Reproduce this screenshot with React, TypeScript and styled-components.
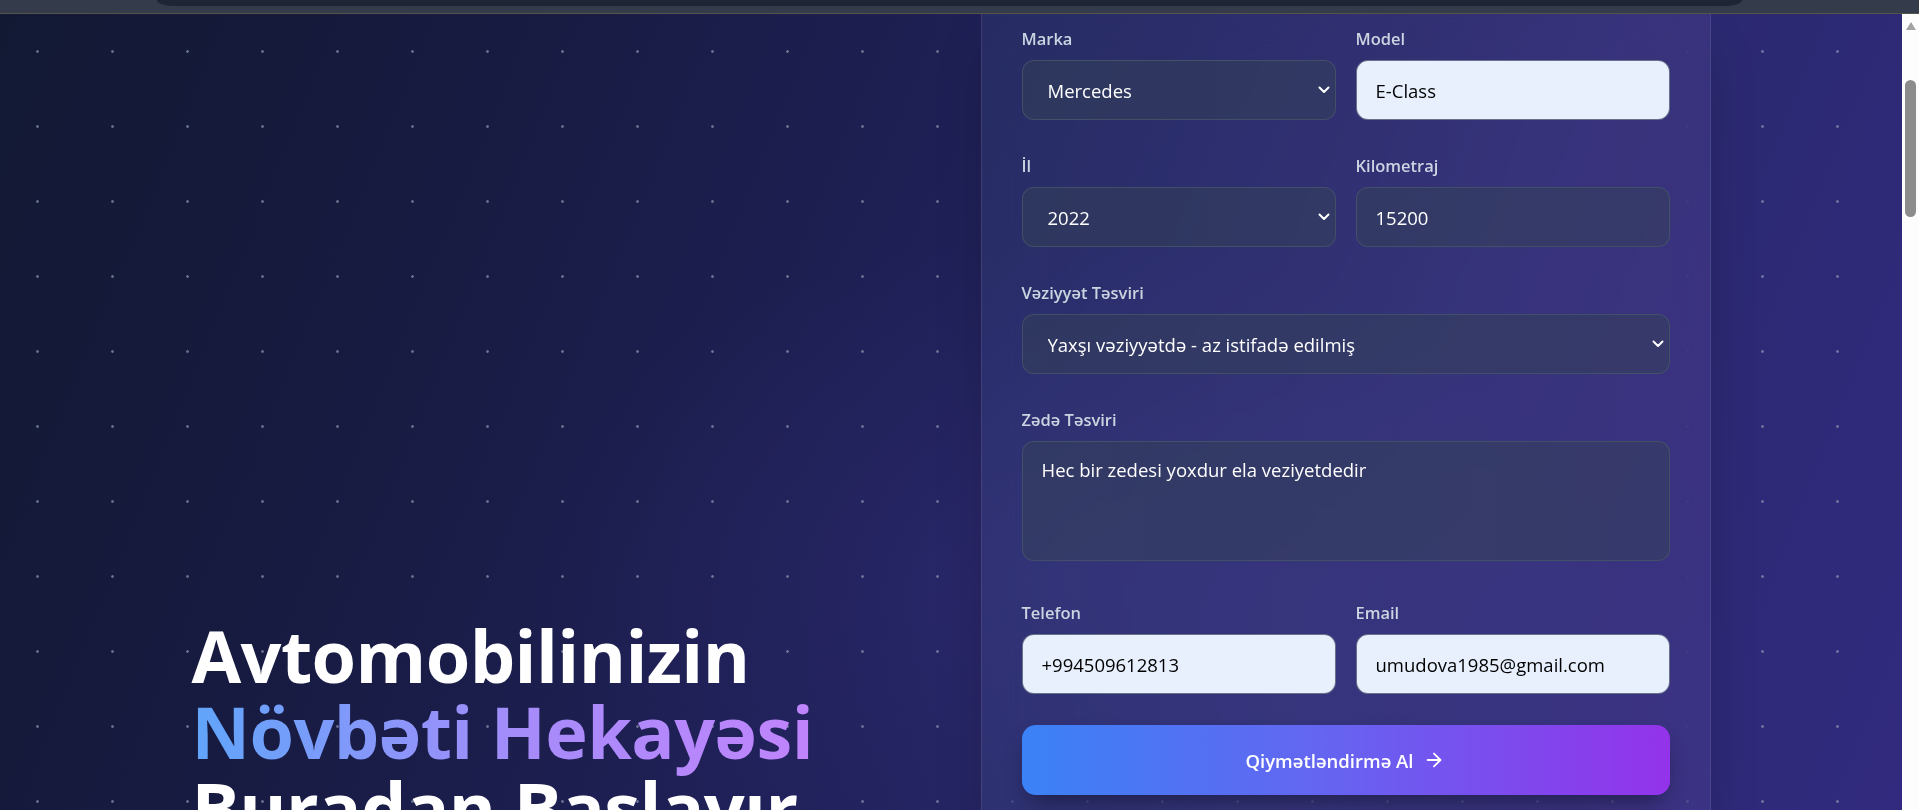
import React from "react";
import styled, { createGlobalStyle, css } from "styled-components";
import { ArrowRight } from "lucide-react";

const FONT = `"Open Sans", "Noto Sans", "DejaVu Sans", sans-serif`;

const GlobalStyle = createGlobalStyle`
  *, *::before, *::after { box-sizing: border-box; }
  html, body { margin: 0; padding: 0; height: 100%; overflow: hidden; background: #1b1d4a; }
  body { font-family: ${FONT}; -webkit-font-smoothing: antialiased; }
`;

const Screen = styled.div`
  width: 1919px;
  height: 810px;
  display: flex;
  flex-direction: column;
`;

const BrowserStrip = styled.div`
  flex: 0 0 14px;
  background: #343c4b;
  border-bottom: 1px solid #55534a;
  padding: 0 177px 0 157px;
`;

const StripTab = styled.div`
  height: 6px;
  background: #1e2535;
  border-bottom-left-radius: 16px 6px;
  border-bottom-right-radius: 16px 6px;
`;

const Viewport = styled.div`
  flex: 1;
  min-height: 0;
  display: flex;
`;

const Page = styled.main`
  flex: 1;
  min-width: 0;
  overflow: hidden;
  background-color: #1b1d4a;
  background-image:
    radial-gradient(circle, rgba(148, 163, 184, 0.6) 1px, transparent 1.7px),
    radial-gradient(ellipse 40% 60% at 55% 70%, rgba(76, 60, 160, 0.18), transparent 70%),
    linear-gradient(112deg, #121933 0%, #181b42 25%, #20215a 50%, #2a296e 72%, #312a7e 100%);
  background-size: 75px 75px, 100% 100%, 100% 100%;
`;

const Container = styled.div`
  width: 1519px;
  height: 100%;
  margin: 0 auto;
  display: grid;
  grid-template-columns: 1fr 730px;
  align-items: start;
`;

const HeroColumn = styled.section`
  padding-top: 603px;
`;

const Headline = styled.h1`
  margin: 0;
  font-family: ${FONT};
  font-weight: 700;
  font-size: 72px;
  line-height: 76px;
  letter-spacing: -0.6px;
  color: #ffffff;
`;

const HeadLine = styled.span`
  display: block;
  white-space: nowrap;
`;

const GradientText = styled.span`
  background: linear-gradient(90deg, #60a5fa 0%, #a78bfa 55%, #c084fc 100%);
  -webkit-background-clip: text;
  background-clip: text;
  color: transparent;
`;

const FormCard = styled.section`
  background:
    linear-gradient(90deg, rgba(59, 130, 246, 0.06), rgba(168, 85, 247, 0.06)),
    rgba(255, 255, 255, 0.035);
  border: 1px solid rgba(255, 255, 255, 0.09);
  border-top: 0;
  backdrop-filter: blur(18px);
  box-shadow: 0 25px 50px -12px rgba(0, 0, 0, 0.25);
  padding: 14px 40px 40px;
`;

const Form = styled.form`
  display: flex;
  flex-direction: column;
  gap: 35px;
`;

const FieldGrid = styled.div<{ $cols: number }>`
  display: grid;
  grid-template-columns: repeat(${(p) => p.$cols}, 1fr);
  gap: 20px;
`;

const Field = styled.div`
  display: flex;
  flex-direction: column;
  min-width: 0;
`;

const Label = styled.label`
  display: block;
  font-family: ${FONT};
  font-weight: 600;
  font-size: 16.5px;
  line-height: 22px;
  color: #cbd5e1;
  margin-bottom: 10px;
`;

const controlBase = css<{ $filled?: boolean }>`
  width: 100%;
  font-family: ${FONT};
  font-size: 18.5px;
  border-radius: 12px;
  border: 1px solid rgba(71, 85, 105, 0.85);
  background: rgba(51, 65, 85, 0.5);
  color: #ffffff;
  outline: none;
  padding: 0 19px;
  ${(p) =>
    p.$filled &&
    css`
      background: #e8f0fe;
      color: #000000;
      border-color: rgba(90, 100, 125, 0.9);
    `}
`;

const TextInput = styled.input<{ $filled?: boolean }>`
  ${controlBase};
  height: 60px;
`;

const SelectWrap = styled.div`
  position: relative;
`;

const Select = styled.select`
  ${controlBase};
  height: 60px;
  appearance: none;
  -webkit-appearance: none;
  padding-left: 25px;
  padding-right: 30px;
`;

const Chevron = styled.svg`
  position: absolute;
  right: 6px;
  top: 50%;
  transform: translateY(-50%);
  pointer-events: none;
`;

const TextArea = styled.textarea`
  ${controlBase};
  display: block;
  height: 120px;
  padding: 14px 19px;
  line-height: 1.5;
  resize: none;
  margin-bottom: 6px;
`;

const SubmitButton = styled.button`
  height: 70px;
  margin-top: -4px;
  border: none;
  border-radius: 14px;
  background: linear-gradient(90deg, #3b82f6 0%, #6366f1 45%, #9333ea 100%);
  box-shadow: 0 12px 24px -8px rgba(0, 0, 0, 0.45);
  color: #ffffff;
  font-family: ${FONT};
  font-weight: 600;
  font-size: 18.5px;
  display: flex;
  align-items: center;
  justify-content: center;
  gap: 10px;
  cursor: pointer;
`;

const Scrollbar = styled.aside`
  flex: 0 0 17px;
  background: #fdfdfd;
  display: flex;
  flex-direction: column;
  align-items: center;
  padding-top: 8px;
`;

const ScrollArrow = styled.div`
  width: 0;
  height: 0;
  border-left: 5.5px solid transparent;
  border-right: 5.5px solid transparent;
  border-bottom: 8px solid #a3a3a3;
`;

const ScrollThumb = styled.div`
  width: 11px;
  height: 137px;
  margin-top: 50px;
  border-radius: 6px;
  background: #8c8c8c;
`;

const ChevronIcon = () => (
  <Chevron width="12" height="8" viewBox="0 0 12 8" fill="none">
    <path d="M1.5 1.5L6 6L10.5 1.5" stroke="#ffffff" strokeWidth="2" strokeLinecap="round" strokeLinejoin="round" />
  </Chevron>
);

export default function App() {
  return (
    <>
      <GlobalStyle />
      <Screen>
        <BrowserStrip>
          <StripTab />
        </BrowserStrip>
        <Viewport>
          <Page>
            <Container>
              <HeroColumn>
                <Headline>
                  <HeadLine>Avtomobilinizin</HeadLine>
                  <HeadLine>
                    <GradientText>Növbəti Hekayəsi</GradientText>
                  </HeadLine>
                  <HeadLine>Buradan Başlayır</HeadLine>
                </Headline>
              </HeroColumn>
              <FormCard>
                <Form onSubmit={(e) => e.preventDefault()}>
                  <FieldGrid $cols={2}>
                    <Field>
                      <Label>Marka</Label>
                      <SelectWrap>
                        <Select defaultValue="Mercedes">
                          <option>Mercedes</option>
                          <option>BMW</option>
                          <option>Toyota</option>
                        </Select>
                        <ChevronIcon />
                      </SelectWrap>
                    </Field>
                    <Field>
                      <Label>Model</Label>
                      <TextInput $filled defaultValue="E-Class" />
                    </Field>
                  </FieldGrid>
                  <FieldGrid $cols={2}>
                    <Field>
                      <Label>İl</Label>
                      <SelectWrap>
                        <Select defaultValue="2022">
                          <option>2022</option>
                          <option>2021</option>
                          <option>2020</option>
                        </Select>
                        <ChevronIcon />
                      </SelectWrap>
                    </Field>
                    <Field>
                      <Label>Kilometraj</Label>
                      <TextInput defaultValue="15200" />
                    </Field>
                  </FieldGrid>
                  <FieldGrid $cols={1}>
                    <Field>
                      <Label>Vəziyyət Təsviri</Label>
                      <SelectWrap>
                        <Select defaultValue="good">
                          <option value="good">Yaxşı vəziyyətdə - az istifadə edilmiş</option>
                          <option value="new">Yeni kimi</option>
                        </Select>
                        <ChevronIcon />
                      </SelectWrap>
                    </Field>
                  </FieldGrid>
                  <FieldGrid $cols={1}>
                    <Field>
                      <Label>Zədə Təsviri</Label>
                      <TextArea defaultValue="Hec bir zedesi yoxdur ela veziyetdedir" />
                    </Field>
                  </FieldGrid>
                  <FieldGrid $cols={2}>
                    <Field>
                      <Label>Telefon</Label>
                      <TextInput $filled defaultValue="+994509612813" />
                    </Field>
                    <Field>
                      <Label>Email</Label>
                      <TextInput $filled defaultValue="umudova1985@gmail.com" />
                    </Field>
                  </FieldGrid>
                  <SubmitButton type="submit">
                    Qiymətləndirmə Al
                    <ArrowRight size={22} strokeWidth={2} />
                  </SubmitButton>
                </Form>
              </FormCard>
            </Container>
          </Page>
          <Scrollbar>
            <ScrollArrow />
            <ScrollThumb />
          </Scrollbar>
        </Viewport>
      </Screen>
    </>
  );
}
